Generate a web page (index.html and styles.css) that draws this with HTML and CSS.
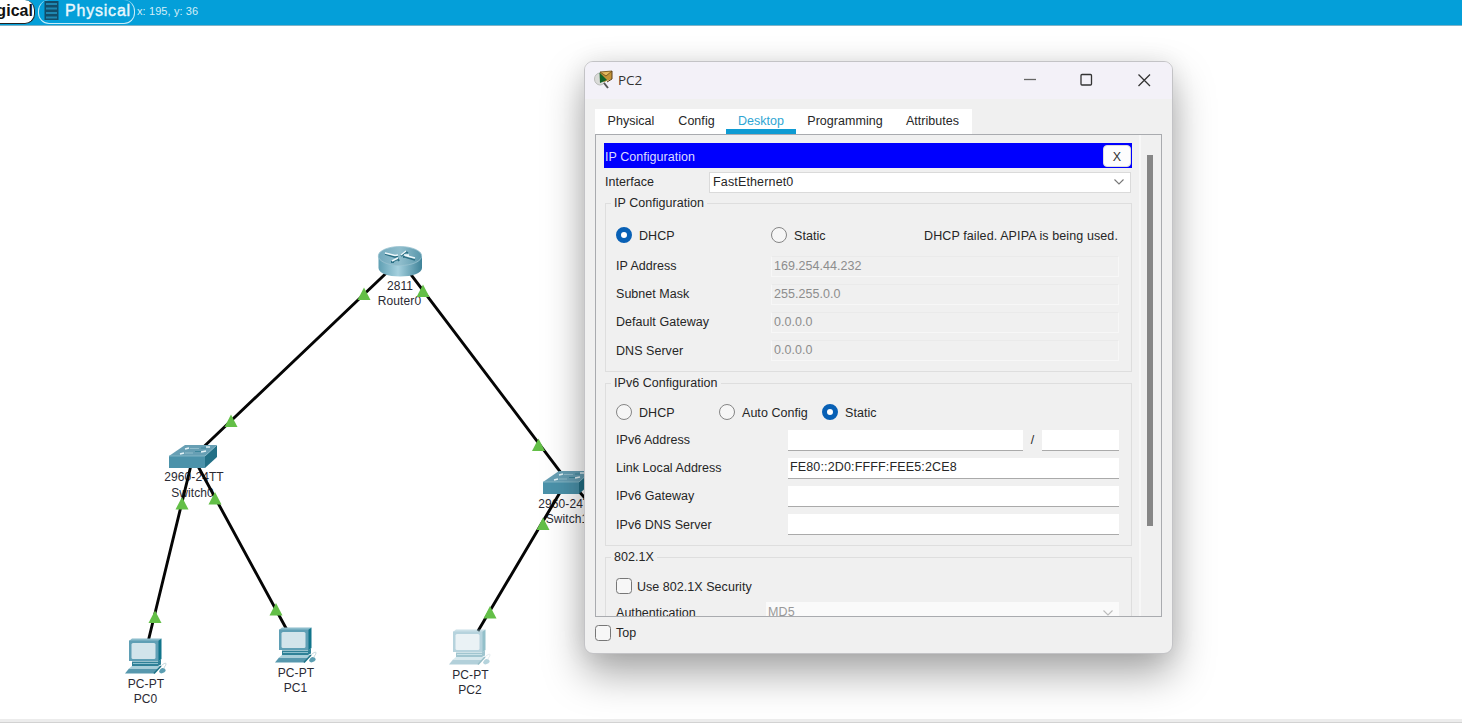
FILE: index.html
```html
<!DOCTYPE html>
<html lang="en">
<head>
<meta charset="utf-8">
<title>PC2</title>
<link rel="stylesheet" href="styles.css">
</head>
<body>
<header class="topbar">
  <div class="mode mode-logical"><span>Logical</span></div>
  <div class="mode mode-physical">
    <svg width="15" height="20" viewBox="0 0 15 20"><rect x=".5" y="0" width="14" height="19" fill="#124d69"/><path d="M2 3h11M2 7.500h11M2 12h11M2 16.500h11" stroke="#1f87b0" stroke-width="2"/></svg>
    <span>Physical</span>
  </div>
  <span class="coords">x: 195, y: 36</span>
</header>

<main class="workspace">
  <svg class="topology" width="1462" height="697" viewBox="0 26 1462 697">
    <defs>
      <linearGradient id="side" x1="0" x2="1"><stop offset="0" stop-color="#5f9fb3"/><stop offset=".45" stop-color="#a5d0de"/><stop offset="1" stop-color="#3e8298"/></linearGradient>
      <linearGradient id="top" x1="0" x2="1"><stop offset="0" stop-color="#72a9bd"/><stop offset=".5" stop-color="#8fbdcc"/><stop offset="1" stop-color="#5997ab"/></linearGradient>
      <g id="router">
        <path d="M-21.500-5v12c0 5 9.500 8.500 21.500 8.500s22-3.500 22-8.500V-5z" fill="url(#side)"/>
        <ellipse cx="0" cy="-5" rx="21.700" ry="9.500" fill="url(#top)" stroke="#9ac3d0" stroke-width=".8"/>
        <path d="M-15-7l10 3 3-1M5-4l10 3M-8 1l6-3 1 2M1-5l5-4 2 1M-9 1h3M3-4l5-1" fill="none" stroke="#2b6f84" stroke-width="1.800"/>
        <path d="M-15-8l10 2.500 3-.5M5-5.500l10 2.500M-8 0l6-3M1-6l5-4M4-6l5 0" fill="none" stroke="#eef8fb" stroke-width="1.400"/>
      </g>
      <g id="switch">
        <path d="M-24-1L-8-12H24L12-1z" fill="#679fb4"/>
        <path d="M-24-1H12V11H-24z" fill="#4b92aa"/>
        <path d="M12-1L24-12V0L12 11z" fill="#237086"/>
        <path d="M-24-1H12L24-12" fill="none" stroke="#8bbdcb" stroke-width=".8"/>
        <path d="M-8-8l4-1M13-10l4 0M-13-3l4-1M8-5l5-1" stroke="#e4f3f7" stroke-width="1.600"/>
        <path d="M-3-8.500h9M-8-4h8" stroke="#9cc5d2" stroke-width=".8"/>
        <path d="M8-9h5M2-5.500h6" stroke="#3c869b" stroke-width="1"/>
      </g>
      <g id="pc">
        <path d="M-17-15l3-2.500H15.500L13-15z" fill="#8bbccb"/>
        <path d="M12-15l3.500-2.500V3L12 6z" fill="#11758b"/>
        <path d="M-17-15.500H12.500V5H-17z" fill="#5f9fb5"/>
        <rect x="-14.500" y="-13" width="24" height="16" rx="1.500" fill="#d2e4eb"/>
        <path d="M-14 5.500H12l3-2v5l-4 2H-14z" fill="#2f8197"/>
        <path d="M-13 7.500H12" stroke="#8cc0ce"/>
        <path d="M-17 12.500H12l-4 5H-21z" fill="#5798ae"/>
        <path d="M-17 12.500L-14 10H15l-3 2.500z" fill="#a7cfda"/>
        <path d="M15 10l-7 7.500" stroke="#196f84" stroke-width="1.500"/>
        <path d="M13 16c1-4 4-5 6-3s-1 4-4 4.500z" fill="#5b9eb2"/>
        <path d="M15 10c2-2 5-4 5-2s-2 2-2 5" fill="none" stroke="#b4cdd4" stroke-width=".8"/>
      </g>
      <path id="up" d="M0-6.500L6.500 6H-6.500z" fill="#63bf47"/>
    </defs>
    <g class="device-label">
      <text x="400" y="289.500">2811</text><text x="399.500" y="305">Router0</text>
      <text x="194" y="481">2960-24TT</text><text x="192.500" y="497">Switch0</text>
      <text x="568" y="508">2960-24TT</text><text x="567" y="523">Switch1</text>
      <text x="146" y="688">PC-PT</text><text x="145.500" y="703">PC0</text>
      <text x="296" y="677">PC-PT</text><text x="295.500" y="692">PC1</text>
      <text x="470.500" y="679">PC-PT</text><text x="470" y="694">PC2</text>
    </g>
    <path class="cable" d="M400 260L193 457M400 260L568 482M193 457L148 642M193 457L287 630M568 479L478 631M568 479L640 560"/>
    <use href="#router" x="400" y="261"/>
    <use href="#switch" x="193" y="457"/>
    <use href="#switch" x="567" y="483"/>
    <use href="#pc" x="146" y="656"/>
    <use href="#pc" x="296" y="645"/>
    <use href="#pc" x="470" y="647" opacity=".45"/>
    <use href="#up" x="364" y="294"/><use href="#up" x="423" y="291"/>
    <use href="#up" x="231" y="421"/><use href="#up" x="538.500" y="445"/>
    <use href="#up" x="182" y="503.500"/><use href="#up" x="215" y="498.500"/>
    <use href="#up" x="543" y="524"/><use href="#up" x="155" y="617"/>
    <use href="#up" x="276" y="609.500"/><use href="#up" x="490" y="612.500"/>
  </svg>
  <div class="bottom-edge"></div>

  <section class="window">
    <div class="titlebar">
      <svg width="20" height="20" viewBox="0 0 20 20"><ellipse cx="6" cy="9" rx="5.500" ry="6" fill="#dadbd8" stroke="#b9bbb8"/><path d="M6 2l12-1v8l-8 3-4-2z" fill="#c39338"/><path d="M6 2l12-1-6 5z" fill="#e5b95d" stroke="#6d4c18" stroke-width=".8"/><path d="M5.500 2.500L13 10l-7 3z" fill="#126428"/><path d="M18 1v8l-5 3" fill="none" stroke="#5b3d18"/><path d="M10 13l4 5" stroke="#555" stroke-width="2"/></svg>
      <span class="title">PC2</span>
      <svg class="controls" width="130" height="16" viewBox="0 0 130 16" fill="none" stroke="#333" stroke-width="1.300"><path d="M1 7.500h12" stroke="#666"/><rect x="58" y="2.500" width="10.500" height="10.500" rx="1"/><path d="M115.500 2.500l11.500 11.500M127 2.500L115.500 14"/></svg>
    </div>
    <nav class="tabs">
      <span class="tab t1">Physical</span><span class="tab t2">Config</span><span class="tab t3 active">Desktop</span><span class="tab t4">Programming</span><span class="tab t5">Attributes</span>
    </nav>
    <div class="pane">
      <div class="content">
        <div class="bluebar"><span>IP Configuration</span><button>X</button></div>
        <div class="interface"><label>Interface</label>
          <div class="combo"><span>FastEthernet0</span><svg width="10" height="6" viewBox="0 0 10 6"><path d="M.5.500L5 5 9.500.500" fill="none" stroke="#777" stroke-width="1.100"/></svg></div>
        </div>
        <fieldset class="group g4">
          <legend>IP Configuration</legend>
          <div class="choices"><i class="radio on"></i><span class="w-dhcp4">DHCP</span><i class="radio"></i><span>Static</span><span class="status">DHCP failed. APIPA is being used.</span></div>
          <div class="row"><label>IP Address</label><div class="field off">169.254.44.232</div></div>
          <div class="row"><label>Subnet Mask</label><div class="field off">255.255.0.0</div></div>
          <div class="row"><label>Default Gateway</label><div class="field off">0.0.0.0</div></div>
          <div class="row"><label>DNS Server</label><div class="field off">0.0.0.0</div></div>
        </fieldset>
        <fieldset class="group g6">
          <legend>IPv6 Configuration</legend>
          <div class="choices"><i class="radio"></i><span class="w-dhcp6">DHCP</span><i class="radio"></i><span class="w-auto">Auto Config</span><i class="radio on"></i><span>Static</span></div>
          <div class="row"><label>IPv6 Address</label><div class="field"></div><span class="slash">/</span><div class="field prefix"></div></div>
          <div class="row"><label>Link Local Address</label><div class="field">FE80::2D0:FFFF:FEE5:2CE8</div></div>
          <div class="row"><label>IPv6 Gateway</label><div class="field"></div></div>
          <div class="row"><label>IPv6 DNS Server</label><div class="field"></div></div>
        </fieldset>
        <fieldset class="group g8">
          <legend>802.1X</legend>
          <div class="choices"><i class="check"></i><span>Use 802.1X Security</span></div>
          <div class="row"><label>Authentication</label><div class="field combo-off"><span>MD5</span><svg width="10" height="6" viewBox="0 0 10 6"><path d="M.5.500L5 5 9.500.500" fill="none" stroke="#bbb" stroke-width="1.100"/></svg></div></div>
        </fieldset>
      </div>
      <div class="scrollbar"><div class="thumb"></div></div>
    </div>
    <footer class="foot"><i class="check"></i><span>Top</span></footer>
  </section>
</main>
</body>
</html>
```
FILE: styles.css
```css
* { box-sizing: border-box; }
body {
  margin: 0; width: 1462px; height: 723px; overflow: hidden; background: #fff;
  font: 12.5px/16px "Liberation Sans", Arial, sans-serif; letter-spacing: .04px; color: #262626;
  display: flex; flex-direction: column; white-space: nowrap;
}
.topbar {
  height: 26px; flex: none; background: #049fd9; border-bottom: 1px solid #7fb3c8;
  display: flex; align-items: flex-start; overflow: hidden;
}
.mode { height: 24px; display: flex; align-items: center; font-size: 16px; padding-bottom: 1px; }
.mode-logical {
  width: 35px; justify-content: flex-end; background: #fff; color: #111; font-weight: bold;
  border-right: 1.500px solid #222; border-bottom: 1.500px solid #222; border-radius: 0 10px 10px 0;
  padding-right: 1px;
}
.mode-physical {
  margin-left: 3px; width: 97px; border: 1px solid #c9ecf8; border-top: 0; border-radius: 11px;
  color: #e9f8fd; padding-left: 5px; gap: 6px; letter-spacing: .8px; -webkit-text-stroke: .4px #e9f8fd;
}
.coords { margin: 3px 0 0 2px; color: #d3eef8; font-size: 11px; letter-spacing: .1px; }
.workspace { position: relative; height: 697px; }
.topology { display: block; }
.device-label { font-size: 12px; text-anchor: middle; fill: #2a2a33; letter-spacing: .1px; }
.cable { stroke: #050505; stroke-width: 2.900; fill: none; }
.bottom-edge { position: absolute; left: 0; right: 0; bottom: 0; height: 4px; background: #ececec; border-bottom: 1px solid #d2d2d2; }

.window {
  position: absolute; left: 584px; top: 35px; width: 589px; height: 593px;
  background: #f0f0f0; border: 1px solid #c3c3c6; border-radius: 9px;
  box-shadow: 0 20px 40px rgba(0,0,0,.34), 0 0 24px rgba(0,0,0,.08);
}
.titlebar {
  height: 37px; background: #f3f1f8; border-radius: 8px 8px 0 0;
  display: flex; align-items: center; padding: 0 19px 2px 9px;
}
.title { font: 13.5px/18px "Open Sans", "Noto Sans", sans-serif; letter-spacing: 0; margin-left: 4px; color: #333; }
.controls { margin-left: auto; }
.tabs { margin: 10px 0 0 10px; width: 377px; height: 25px; background: #fff; display: flex; }
.tab { text-align: center; line-height: 25px; }
.t1 { width: 72px; } .t2 { width: 59px; } .t3 { width: 70px; } .t4 { width: 98px; } .t5 { width: 77px; }
.active { color: #2fa5d3; border-bottom: 5px solid #0e9bd3; }
.pane {
  margin: 0 0 0 10px; width: 567px; height: 483px; border: 1px solid #a9abaf; overflow: hidden;
  display: flex; justify-content: space-between;
}
.content { padding: 8px 0 0 8px; width: 536px; flex: none; }
.bluebar {
  height: 25px; background: #0000fe; color: #dcdcff; display: flex; align-items: center; justify-content: space-between; padding: 2px 1px;
}
.bluebar span { padding-top: 2px; }
.bluebar button { width: 28px; height: 22px; padding: 2px 0 0; border: 1px solid #ddd; border-radius: 4px; background: #fdfdfd; font: inherit; color: #333; }
.interface { display: flex; align-items: center; height: 22px; margin-top: 3px; padding-left: 1px; }
.interface label { width: 104px; }
.combo { width: 422px; height: 21px; background: #fff; border: 1px solid #dadada; display: flex; align-items: center; justify-content: space-between; padding: 0 6px 0 3px; letter-spacing: .15px; }
.group { position: relative; margin: 0 0 0 1px; padding: 0 12px 0 10px; border: 1px solid #dedede; width: 527px; min-width: 0; }
.group legend { position: absolute; left: 5px; top: -9px; background: #f0f0f0; padding: 0 3px; line-height: 16px; }
.g4 { margin-top: 10px; height: 169px; padding-top: 18px; }
.g6 { margin-top: 11px; height: 163px; padding-top: 17px; }
.g8 { margin-top: 11px; height: 163px; padding-top: 17px; }
.choices { display: flex; align-items: center; height: 26px; }
.g4 .choices { margin-bottom: 4px; }
.g6 .choices { height: 22px; margin-bottom: 3px; }
.g8 .choices { height: 22px; margin-bottom: 1px; }
.radio { flex: none; width: 16px; height: 16px; border: 1px solid #858585; border-radius: 50%; background: #f6f6f6; margin-right: 7px; }
.radio.on { border: 5px solid #0860b5; background: #fff; }
.check { flex: none; width: 16px; height: 16px; border: 1px solid #777; border-radius: 3.500px; background: #f7f7f7; margin-right: 5px; }
.choices span { padding-top: 2px; }
.g6 .choices span { padding-top: 1px; }
.w-dhcp4 { width: 132px; }
.w-dhcp6 { width: 80px; }
.w-auto { width: 80px; }
.status { margin-left: auto; margin-right: 1px; letter-spacing: .1px; }
.row { display: flex; align-items: center; height: 28.200px; }
.row label { width: 172px; flex: none; }
.g4 .row label { width: 155px; }
.g8 .row label { width: 150px; }
.g8 .row { height: 29px; }
.field { flex: 1; height: 21px; line-height: 19px; background: #fff; border-bottom: 1.500px solid #aaa; padding-left: 2px; letter-spacing: .15px; }
.field.off { border: 1px solid #f7f7f7; border-top-color: #eaeaea; color: #8d8d8d; background: #f0f0f0; letter-spacing: .04px; }
.slash { width: 19px; text-align: center; }
.field.prefix { flex: 0 0 77px; }
.field.combo-off { background: #fafafa; color: #999; border: 0; display: flex; align-items: center; justify-content: space-between; padding-right: 6px; }
.scrollbar { width: 22px; border-left: 2px solid #f7f7f7; padding: 20px 7px 0 6px; }
.thumb { width: 6px; height: 371px; background: #868686; }
.foot { display: flex; align-items: center; height: 32px; padding-left: 10px; }
```
